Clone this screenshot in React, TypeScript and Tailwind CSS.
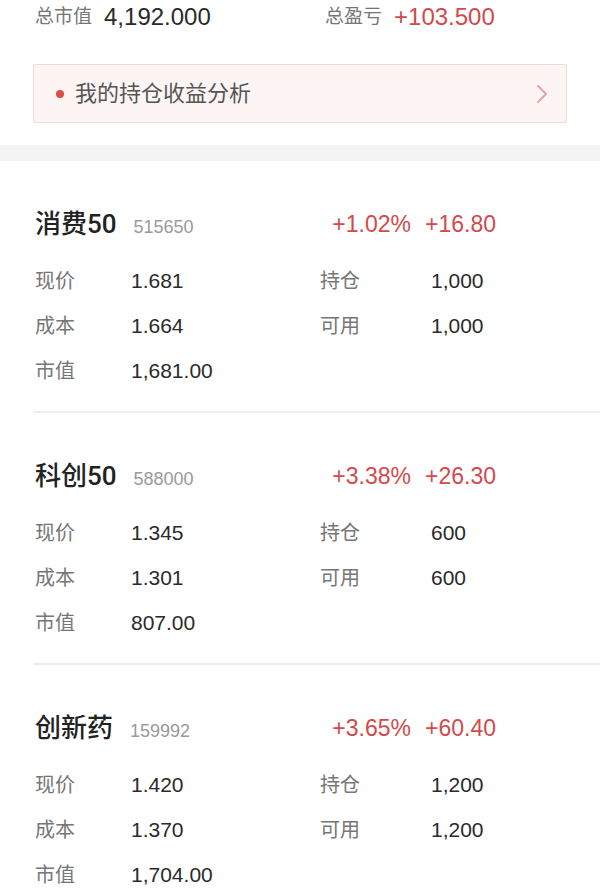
import React from "react";

type Holding = {
  name: string;
  code: string;
  pct: string;
  pnl: string;
  price: string;
  cost: string;
  value: string;
  qty: string;
  avail: string;
};

const holdings: Holding[] = [
  { name: "消费50", code: "515650", pct: "+1.02%", pnl: "+16.80", price: "1.681", cost: "1.664", value: "1,681.00", qty: "1,000", avail: "1,000" },
  { name: "科创50", code: "588000", pct: "+3.38%", pnl: "+26.30", price: "1.345", cost: "1.301", value: "807.00", qty: "600", avail: "600" },
  { name: "创新药", code: "159992", pct: "+3.65%", pnl: "+60.40", price: "1.420", cost: "1.370", value: "1,704.00", qty: "1,200", avail: "1,200" },
];

const Row = ({ label, value, label2, value2 }: { label: string; value: string; label2?: string; value2?: string }) => (
  <div className="flex items-center h-[45px]">
    <div className="w-[96px] text-[20px] text-[#767676]">{label}</div>
    <div className="w-[189px] text-[21px] text-[#2a2a2a]">{value}</div>
    {label2 && <div className="w-[111px] text-[20px] text-[#767676]">{label2}</div>}
    {value2 && <div className="text-[21px] text-[#2a2a2a]">{value2}</div>}
  </div>
);

const HoldingCard = ({ h, last }: { h: Holding; last: boolean }) => (
  <div>
    <div className="px-[35px] pt-[45px] pb-[18px]">
      <div className="flex items-center h-9">
        <div className="w-[296px] flex items-baseline">
          <span className="font-['Roboto','Noto_Sans_CJK_SC',sans-serif] text-[26px] font-medium text-[#222]">{h.name}</span>
          <span className="ml-[17px] text-[18px] text-[#9a9a9a]">{h.code}</span>
        </div>
        <div className="w-[80px] text-right text-[23px] text-[#d24a4b]">{h.pct}</div>
        <div className="ml-[14px] text-[23px] text-[#d24a4b]">{h.pnl}</div>
      </div>
      <div className="mt-4">
        <Row label="现价" value={h.price} label2="持仓" value2={h.qty} />
        <Row label="成本" value={h.cost} label2="可用" value2={h.avail} />
        <Row label="市值" value={h.value} />
      </div>
    </div>
    {!last && <div className="ml-[34px] h-[2px] bg-[#eeeeee]" />}
  </div>
);

export default function App() {
  return (
    <div
      className="w-[600px] h-[890px] overflow-hidden bg-white"
      style={{ fontFamily: '"Liberation Sans", "Noto Sans CJK SC", sans-serif' }}
    >
      <div className="flex items-center h-[34px] px-[35px]">
        <div className="flex items-center w-[290px]">
          <span className="text-[19px] text-[#767676]">总市值</span>
          <span className="ml-3 text-[24px] text-[#2a2a2a]">4,192.000</span>
        </div>
        <div className="flex items-center">
          <span className="text-[19px] text-[#767676]">总盈亏</span>
          <span className="ml-3 text-[24px] text-[#d24a4b]">+103.500</span>
        </div>
      </div>

      <div className="mx-[33px] mt-[30px] h-[59px] flex items-center border border-[#f0dcd9] bg-[#fcf5f4] rounded-[2px] pl-[22px] pr-[18px]">
        <span className="w-[8px] h-[8px] rounded-full bg-[#de4c44]" />
        <span className="ml-[11px] text-[22px] text-[#555]">我的持仓收益分析</span>
        <svg className="ml-auto" width="12" height="20" viewBox="0 0 12 20" fill="none">
          <path d="M2 2 L10 10 L2 18" stroke="#e2a2a2" strokeWidth="1.8" strokeLinecap="round" strokeLinejoin="round" />
        </svg>
      </div>

      <div className="mt-[22px] h-[16px] bg-[#f3f3f3]" />

      {holdings.map((h, i) => (
        <HoldingCard key={h.code} h={h} last={i === holdings.length - 1} />
      ))}
    </div>
  );
}
